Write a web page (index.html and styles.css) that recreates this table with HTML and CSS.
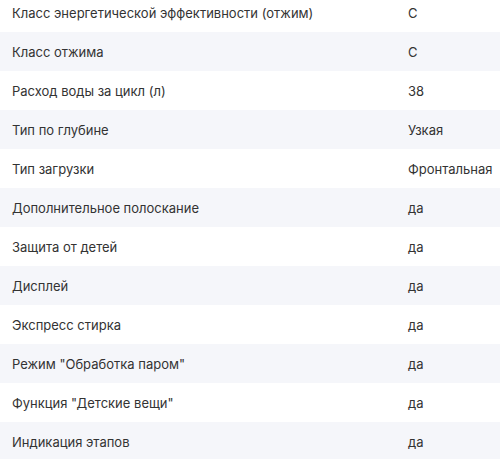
FILE: index.html
```html
<!DOCTYPE html>
<html lang="ru">
<head>
<meta charset="utf-8">
<link rel="stylesheet" href="styles.css">
</head>
<body>
<div class="specs">
  <div class="row"><span class="name">Класс энергетической эффективности (отжим)</span><span class="val">C</span></div>
  <div class="row"><span class="name">Класс отжима</span><span class="val">C</span></div>
  <div class="row"><span class="name">Расход воды за цикл (л)</span><span class="val">38</span></div>
  <div class="row"><span class="name">Тип по глубине</span><span class="val">Узкая</span></div>
  <div class="row"><span class="name">Тип загрузки</span><span class="val">Фронтальная</span></div>
  <div class="row"><span class="name">Дополнительное полоскание</span><span class="val">да</span></div>
  <div class="row"><span class="name">Защита от детей</span><span class="val">да</span></div>
  <div class="row"><span class="name">Дисплей</span><span class="val">да</span></div>
  <div class="row"><span class="name">Экспресс стирка</span><span class="val">да</span></div>
  <div class="row"><span class="name">Режим "Обработка паром"</span><span class="val">да</span></div>
  <div class="row"><span class="name">Функция "Детские вещи"</span><span class="val">да</span></div>
  <div class="row"><span class="name">Индикация этапов</span><span class="val">да</span></div>
</div>
</body>
</html>
```
FILE: styles.css
```css
html, body { margin: 0; padding: 0; background: #fff; }
body { font-family: Inter, "Noto Sans", sans-serif; font-size: 13px; color: #333; }
.specs { margin-top: -7px; }
.row { display: grid; grid-template-columns: 396px 1fr; height: 39px; align-items: center; padding-left: 12px; }
.row:nth-child(even) { background: #f5f6fa; }
.val { white-space: nowrap; }
```
